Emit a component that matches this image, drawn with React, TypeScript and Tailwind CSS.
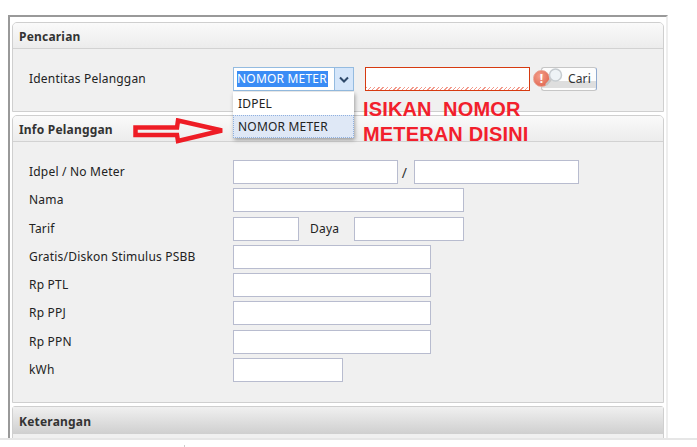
const inputCls = "h-[24px] bg-white border border-[#b8bccf] block shrink-0";

function Panel({ title, className, children }: { title: string; className: string; children?: React.ReactNode }) {
  return (
    <section className={`border border-[#cfcfcf] rounded-t-[5px] bg-[#f0f0f0] overflow-hidden ${className}`}>
      <h2 className="h-[26px] pl-[6px] pt-[2px] flex items-center text-[12px] font-bold text-[#333] bg-gradient-to-b from-[#fafafa] to-[#ececec] border-b border-[#d2d2d2]">
        {title}
      </h2>
      {children}
    </section>
  );
}

function Row({ label, children }: { label: string; children: React.ReactNode }) {
  return (
    <div className="flex items-center h-[24px]">
      <label className="w-[204px] shrink-0 text-[12px] text-[#222]">{label}</label>
      {children}
    </div>
  );
}

function RedArrow() {
  return (
    <svg className="absolute left-[133px] top-[118px]" width="94" height="26" viewBox="0 0 94 26" fill="none">
      <path d="M2.5 9.5H44L45 2.5L89 12.5L45 23L44 17H2.5Z" stroke="#ee1c25" strokeWidth="4.5" strokeLinejoin="miter" />
    </svg>
  );
}

function ErrorBadge() {
  return (
    <span className="absolute left-[533px] top-[70px] w-[17px] h-[17px] rounded-full bg-[radial-gradient(circle_at_40%_35%,#f4a08c,#dc5a44)] border border-[#e9a090] flex items-center justify-center text-white text-[12px] font-bold leading-none">
      !
    </span>
  );
}

export default function App() {
  return (
    <div className="relative w-[697px] h-[447px] bg-white overflow-hidden font-['Noto_Sans',sans-serif] tracking-[0.2px]">
      <div className="ml-[8px] mt-[15px] w-[660px] h-[423px] border-t-[2px] border-l-[2px] border-t-[#999] border-l-[#999] border-r-[2px] border-r-[#eee] pt-[5px] pl-[2px] pr-[2px] flex flex-col gap-[3px] overflow-hidden">
        <Panel title="Pencarian" className="h-[90px] shrink-0">
          <div className="pt-[18px] pl-[16px] flex items-center h-[24px] box-content">
            <label className="w-[204px] shrink-0 text-[12px] text-[#222]">Identitas Pelanggan</label>
            <div className="w-[121px] h-[24px] border border-[#94bbe0] bg-white flex shrink-0">
              <div className="flex-1 flex items-center pl-[3px]">
                <span className="bg-[#3a8cf5] text-white text-[12px] leading-[16px] whitespace-nowrap w-[91px] overflow-hidden">NOMOR METER</span>
              </div>
              <div className="w-[19px] bg-[#d5e6fa] border-l border-[#94bbe0] flex items-center justify-center">
                <svg width="10" height="7" viewBox="0 0 10 7"><path d="M1 1.5L5 5.5L9 1.5" stroke="#2f4a6b" strokeWidth="2" fill="none" /></svg>
              </div>
            </div>
            <div className="ml-[11px] w-[165px] h-[24px] bg-white border border-[#d63a10] shrink-0 flex flex-col justify-end">
              <div className="h-[3px] bg-[repeating-linear-gradient(135deg,#f29a8c_0,#f29a8c_1px,#fff_1px,#fff_3px)]" />
            </div>
            <button className="ml-[11px] w-[56px] h-[24px] rounded-[3px] border border-[#c6c6c6] border-r-[#8fa9cf] bg-[linear-gradient(#fdfdfd_0,#fdfdfd_60%,#dedede_60%,#dedede_90%,#fdfdfd_90%)] text-[12px] text-[#333] pl-[21px] shrink-0">
              Cari
            </button>
          </div>
        </Panel>
        <Panel title="Info Pelanggan" className="h-[288px] shrink-0">
          <div className="pt-[18px] pl-[16px] flex flex-col gap-[4.3px]">
            <Row label="Idpel / No Meter">
              <div className={`${inputCls} w-[165px]`} />
              <span className="w-[16px] text-center pr-[3px] text-[14px] text-[#333]">/</span>
              <div className={`${inputCls} w-[165px]`} />
            </Row>
            <Row label="Nama"><div className={`${inputCls} w-[231px]`} /></Row>
            <Row label="Tarif">
              <div className={`${inputCls} w-[66px]`} />
              <span className="w-[55px] pl-[11px] text-[12px] text-[#222]">Daya</span>
              <div className={`${inputCls} w-[110px]`} />
            </Row>
            <Row label="Gratis/Diskon Stimulus PSBB"><div className={`${inputCls} w-[198px]`} /></Row>
            <Row label="Rp PTL"><div className={`${inputCls} w-[198px]`} /></Row>
            <Row label="Rp PPJ"><div className={`${inputCls} w-[198px]`} /></Row>
            <Row label="Rp PPN"><div className={`${inputCls} w-[198px]`} /></Row>
            <Row label="kWh"><div className={`${inputCls} w-[110px]`} /></Row>
          </div>
        </Panel>
        <section className="border border-[#cfcfcf] rounded-t-[3px] bg-[#f0f0f0] shrink-0 h-[40px]">
          <h2 className="h-[27px] pl-[6px] pt-[2px] flex items-center text-[12px] font-bold text-[#333] bg-gradient-to-b from-[#f0f0f0] to-[#cfcfcf]">Keterangan</h2>
        </section>
      </div>
      <div className="absolute left-0 top-[438px] w-full h-[2px] bg-[#e6e6e6]" />
      <div className="absolute left-0 top-[440px] w-full h-[7px] bg-white" />
      <div className="absolute left-[184px] top-[445px] w-px h-[2px] bg-[#ccc]" />

      {/* dropdown */}
      <div className="absolute left-[233px] top-[92px] w-[121px] h-[46px] bg-white shadow-[1px_2px_4px_rgba(0,0,0,0.35)] text-[12px] text-[#222]">
        <div className="h-[23px] pl-[5px] flex items-center">IDPEL</div>
        <div className="h-[23px] pl-[4px] flex items-center bg-[#dfe8f6] border border-dotted border-[#8fb0e0]">NOMOR METER</div>
      </div>

      {/* annotations */}
      <RedArrow />
      <ErrorBadge />
      <svg className="absolute left-[545px] top-[67px]" width="20" height="22" viewBox="0 0 20 22" fill="none">
        <circle cx="10.5" cy="8" r="6" fill="#eef3f6" stroke="#c6ccd0" strokeWidth="1.5" />
        <path d="M6 12.5L1 18" stroke="#c4c4c4" strokeWidth="2.5" />
      </svg>
      <div className="absolute left-[363px] top-[97px] text-[20px] leading-[25px] font-bold text-[#f2202c] whitespace-pre font-['Liberation_Sans',sans-serif] tracking-[0.15px]">
        {"ISIKAN  NOMOR\nMETERAN DISINI"}
      </div>
    </div>
  );
}
